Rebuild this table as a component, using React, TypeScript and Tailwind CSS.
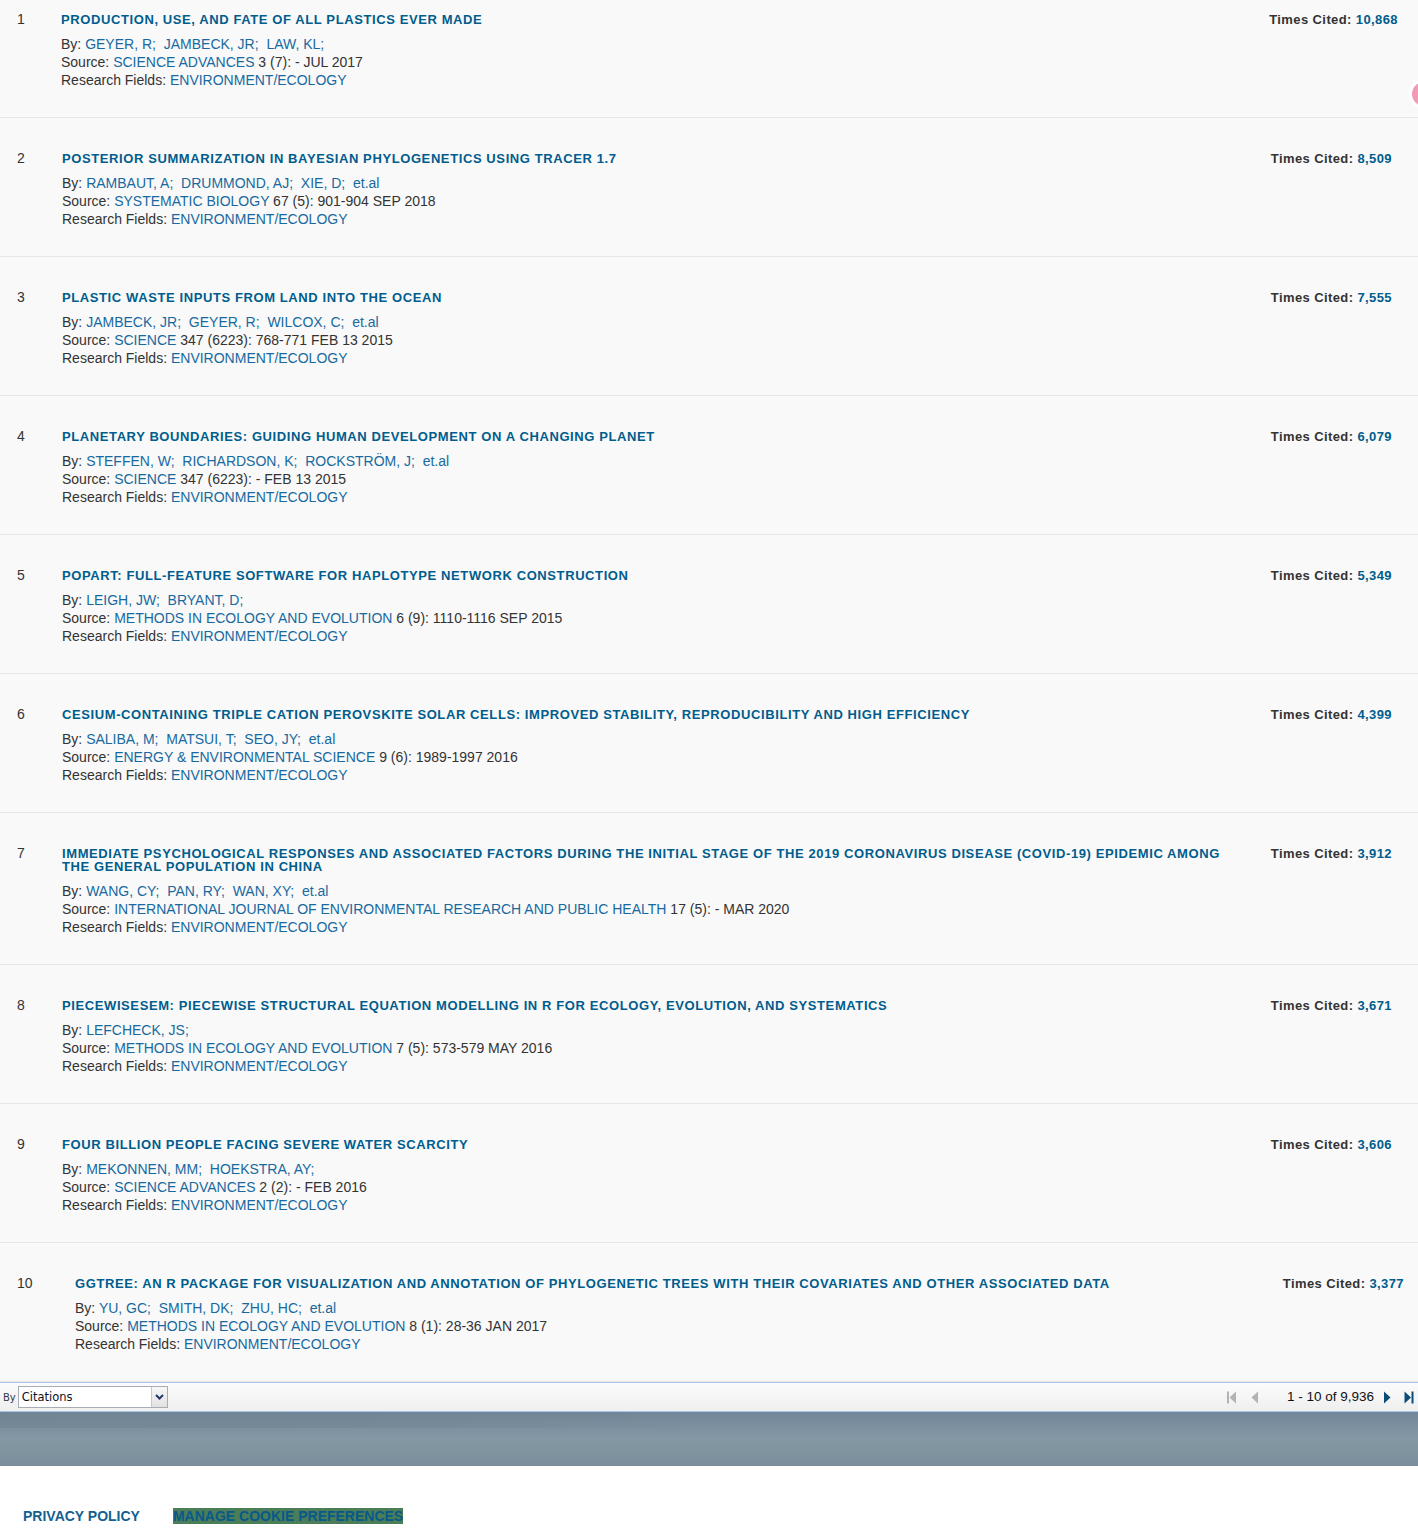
import React from 'react';

type Paper = {
  title: string;
  authors: string[];
  etal: boolean;
  journal: string;
  rest: string;
  cited: string;
};

const papers: Paper[] = [
  {
    title: 'PRODUCTION, USE, AND FATE OF ALL PLASTICS EVER MADE',
    authors: ['GEYER, R', 'JAMBECK, JR', 'LAW, KL'],
    etal: false,
    journal: 'SCIENCE ADVANCES',
    rest: ' 3 (7): - JUL 2017',
    cited: '10,868',
  },
  {
    title: 'POSTERIOR SUMMARIZATION IN BAYESIAN PHYLOGENETICS USING TRACER 1.7',
    authors: ['RAMBAUT, A', 'DRUMMOND, AJ', 'XIE, D'],
    etal: true,
    journal: 'SYSTEMATIC BIOLOGY',
    rest: ' 67 (5): 901-904 SEP 2018',
    cited: '8,509',
  },
  {
    title: 'PLASTIC WASTE INPUTS FROM LAND INTO THE OCEAN',
    authors: ['JAMBECK, JR', 'GEYER, R', 'WILCOX, C'],
    etal: true,
    journal: 'SCIENCE',
    rest: ' 347 (6223): 768-771 FEB 13 2015',
    cited: '7,555',
  },
  {
    title: 'PLANETARY BOUNDARIES: GUIDING HUMAN DEVELOPMENT ON A CHANGING PLANET',
    authors: ['STEFFEN, W', 'RICHARDSON, K', 'ROCKSTRÖM, J'],
    etal: true,
    journal: 'SCIENCE',
    rest: ' 347 (6223): - FEB 13 2015',
    cited: '6,079',
  },
  {
    title: 'POPART: FULL-FEATURE SOFTWARE FOR HAPLOTYPE NETWORK CONSTRUCTION',
    authors: ['LEIGH, JW', 'BRYANT, D'],
    etal: false,
    journal: 'METHODS IN ECOLOGY AND EVOLUTION',
    rest: ' 6 (9): 1110-1116 SEP 2015',
    cited: '5,349',
  },
  {
    title: 'CESIUM-CONTAINING TRIPLE CATION PEROVSKITE SOLAR CELLS: IMPROVED STABILITY, REPRODUCIBILITY AND HIGH EFFICIENCY',
    authors: ['SALIBA, M', 'MATSUI, T', 'SEO, JY'],
    etal: true,
    journal: 'ENERGY & ENVIRONMENTAL SCIENCE',
    rest: ' 9 (6): 1989-1997 2016',
    cited: '4,399',
  },
  {
    title: 'IMMEDIATE PSYCHOLOGICAL RESPONSES AND ASSOCIATED FACTORS DURING THE INITIAL STAGE OF THE 2019 CORONAVIRUS DISEASE (COVID-19) EPIDEMIC AMONG THE GENERAL POPULATION IN CHINA',
    authors: ['WANG, CY', 'PAN, RY', 'WAN, XY'],
    etal: true,
    journal: 'INTERNATIONAL JOURNAL OF ENVIRONMENTAL RESEARCH AND PUBLIC HEALTH',
    rest: ' 17 (5): - MAR 2020',
    cited: '3,912',
  },
  {
    title: 'PIECEWISESEM: PIECEWISE STRUCTURAL EQUATION MODELLING IN R FOR ECOLOGY, EVOLUTION, AND SYSTEMATICS',
    authors: ['LEFCHECK, JS'],
    etal: false,
    journal: 'METHODS IN ECOLOGY AND EVOLUTION',
    rest: ' 7 (5): 573-579 MAY 2016',
    cited: '3,671',
  },
  {
    title: 'FOUR BILLION PEOPLE FACING SEVERE WATER SCARCITY',
    authors: ['MEKONNEN, MM', 'HOEKSTRA, AY'],
    etal: false,
    journal: 'SCIENCE ADVANCES',
    rest: ' 2 (2): - FEB 2016',
    cited: '3,606',
  },
  {
    title: 'GGTREE: AN R PACKAGE FOR VISUALIZATION AND ANNOTATION OF PHYLOGENETIC TREES WITH THEIR COVARIATES AND OTHER ASSOCIATED DATA',
    authors: ['YU, GC', 'SMITH, DK', 'ZHU, HC'],
    etal: true,
    journal: 'METHODS IN ECOLOGY AND EVOLUTION',
    rest: ' 8 (1): 28-36 JAN 2017',
    cited: '3,377',
  },
];

const PaperRow: React.FC<{ p: Paper; n: number }> = ({ p, n }) => {
  // first row is scrolled a little, last row sits in a wider number column
  const first = n === 1;
  const last = n === 10;
  return (
    <div
      className={`flex items-start border-b border-[#e6e6e6] bg-[#f9f9f9] pb-[28px] ${first ? 'pt-[13px] pr-[20px]' : 'pt-[34px]'} ${last ? 'pr-[14px]' : ''} ${!first && !last ? 'pr-[26px]' : ''}`}
    >
      <div className={`shrink-0 pl-[17px] text-[14px] leading-[13px] text-[#333] ${last ? 'w-[75px]' : first ? 'w-[61px]' : 'w-[62px]'}`}>
        {n}
      </div>
      <div className="min-w-0 flex-1">
        <div className="flex items-start gap-[45px]">
          <div className="flex-1 text-[13px] font-bold leading-[13px] tracking-[0.6px] text-[#005d8d]">{p.title}</div>
          <div className="shrink-0 whitespace-nowrap text-[13px] font-bold leading-[13px] tracking-[0.4px] text-[#333]">
            Times Cited: <span className="text-[#005d8d]">{p.cited}</span>
          </div>
        </div>
        <div className="mt-[9px] text-[14px] leading-[18px] text-[#333]">
          <div>
            By:{' '}
            {p.authors.map((a, i) => (
              <span key={i}>
                <span className="text-[#1769a0]">{a};</span>
                {'\u00a0 '}
              </span>
            ))}
            {p.etal && <span className="text-[#1769a0]">et.al</span>}
          </div>
          <div>
            Source: <span className="text-[#1769a0]">{p.journal}</span>
            {p.rest}
          </div>
          <div>
            Research Fields: <span className="text-[#1769a0]">ENVIRONMENT/ECOLOGY</span>
          </div>
        </div>
      </div>
    </div>
  );
};

const PagerIcon: React.FC<{ kind: 'first' | 'prev' | 'next' | 'last'; active: boolean }> = ({ kind, active }) => {
  const c = active ? '#0e4c78' : '#b3b3b3';
  return (
    <svg width="10" height="13" viewBox="0 0 10 13">
      {kind === 'first' && (
        <>
          <rect x="0" y="0.5" width="2" height="12" fill={c} />
          <path d="M9 0.5 L2.5 6.5 L9 12.5 Z" fill={c} />
        </>
      )}
      {kind === 'prev' && <path d="M8 0.5 L1.5 6.5 L8 12.5 Z" fill={c} />}
      {kind === 'next' && <path d="M1 0.5 L7.5 6.5 L1 12.5 Z" fill={c} />}
      {kind === 'last' && (
        <>
          <path d="M0.5 0.5 L7 6.5 L0.5 12.5 Z" fill={c} />
          <rect x="7.5" y="0.5" width="2" height="12" fill={c} />
        </>
      )}
    </svg>
  );
};

export default function App() {
  return (
    <div className="relative w-full overflow-hidden bg-white font-['Liberation_Sans',Arial,sans-serif]">
      {/* list */}
      <div className="bg-[#f9f9f9]">
        {papers.map((p, i) => (
          <PaperRow key={i} p={p} n={i + 1} />
        ))}
      </div>

      {/* floating chat bubble at the edge */}
      <div className="absolute right-[-21px] top-[79px] flex h-[30px] w-[30px] items-center justify-center rounded-full bg-white">
        <div className="h-[24px] w-[24px] rounded-full bg-[#f39ab4]" />
      </div>

      {/* toolbar */}
      <div className="flex h-[30px] items-center justify-between border-y border-[#a8c7ea] bg-gradient-to-b from-[#fbfbfb] to-[#efefef]">
        <div className="flex items-center">
          <span className="ml-[3px] mr-[2px] font-['DejaVu_Sans',sans-serif] text-[10px] text-[#2d3a4a]">By</span>
          <div className="flex h-[22px] w-[150px] items-stretch border border-[#a6adb7] bg-white">
            <span className="flex-1 pl-[3px] font-['DejaVu_Sans',sans-serif] text-[11.5px] leading-[20px] text-[#0a0f1e]">Citations</span>
            <div className="flex w-[16px] items-center justify-center border-l border-[#c3c8cf] bg-gradient-to-b from-[#f7f7f7] to-[#e2e2e2]">
              <svg width="9" height="6" viewBox="0 0 9 6">
                <path d="M1 1 L4.5 4.5 L8 1" stroke="#24386b" strokeWidth="2" fill="none" />
              </svg>
            </div>
          </div>
        </div>
        <div className="flex items-center pr-[4px]">
          <PagerIcon kind="first" active={false} />
          <span className="ml-[13px]">
            <PagerIcon kind="prev" active={false} />
          </span>
          <span className="ml-[27px] text-[13.5px] text-[#111]">1 - 10 of 9,936</span>
          <span className="ml-[9px]">
            <PagerIcon kind="next" active />
          </span>
          <span className="ml-[11px]">
            <PagerIcon kind="last" active />
          </span>
        </div>
      </div>

      {/* grey band */}
      <div className="relative h-[54px] bg-gradient-to-b from-[#72869a] via-[#8498a4] to-[#7b8e9b]">
        <div className="absolute left-0 top-0 h-[16px] w-[700px] bg-gradient-to-r from-[#6f8390]/60 via-[#6f8390]/50 to-transparent" />
      </div>

      {/* footer */}
      <div className="flex h-[72px] items-start gap-[33px] bg-white pl-[23px] pt-[42px] text-[14px] font-bold leading-[16px]">
        <a className="text-[#145f91]">PRIVACY POLICY</a>
        <a className="bg-[#4b7d59] text-[#07598a]">MANAGE COOKIE PREFERENCES</a>
      </div>
    </div>
  );
}
